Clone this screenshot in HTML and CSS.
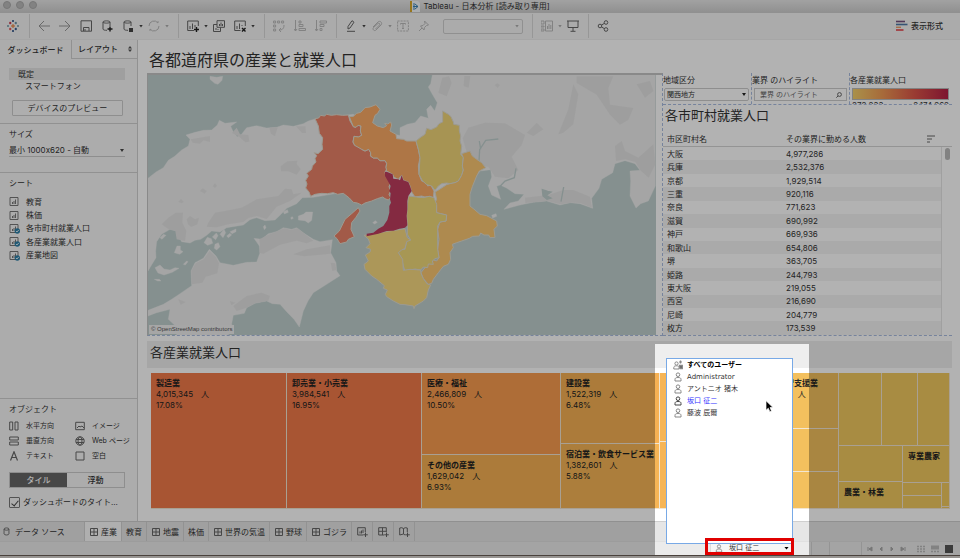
FILE: index.html
```html
<!DOCTYPE html>
<html lang="ja">
<head>
<meta charset="utf-8">
<title>Tableau - 日本分析</title>
<link rel="stylesheet" href="styles.css">
</head>
<body>
<svg class="defs" aria-hidden="true">
  <symbol id="grid" viewBox="0 0 8 8"><path d="M.5.5h7v7h-7zM.5 4h7M4 .5v7"/></symbol>
  <symbol id="sheet" viewBox="0 0 11 11"><path d="M1 1.500h8v8H1zM3.500 8V6M5 8V5M6.500 8V3.500"/></symbol>
  <symbol id="used" viewBox="0 0 11 11"><path d="M1 1.500h8v8H1zM3.500 8V6M5 8V5M6.500 8V3.500"/><circle cx="8.300" cy="8" r="2.700" fill="#2f80a8" stroke="none"/><path d="M7 8l1 1 1.700-2" stroke="#fff" stroke-width=".8"/></symbol>
  <symbol id="person" viewBox="0 0 8 10"><circle cx="4" cy="2.700" r="1.800"/><path d="M1 9V7.500C1 6 2 5.500 4 5.500S7 6 7 7.500V9z"/></symbol>
  <symbol id="people" viewBox="0 0 10 10"><circle cx="3.500" cy="3.500" r="1.600"/><path d="M.8 9V7.500C.8 6.300 2 5.800 3.500 5.800S6 6.300 6 7.500V9z"/><path d="M7.500.5v3M6.300 2h2.400M6.500 5.500h2.800v3H7z" fill="#555" stroke-width="1.300"/></symbol>
</svg>
<div class="app">
  <header class="titlebar">
    <div class="lights"><i></i><i></i><i></i></div>
    <svg class="doc" viewBox="0 0 10 11"><path fill="#f4f8fc" d="M2 0h6l2 2v9H2z"/><path fill="#d9a92c" d="M0 0h2v11H0z"/><path d="M4 2v7M3 5.500h5M5 3l3 2.500L5 8" stroke="#3a85b8" fill="none"/></svg>
    <span>Tableau - 日本分析 [読み取り専用]</span>
  </header>

  <div class="toolbar">
    <button class="logo" aria-label="スタート ページ"><svg viewBox="0 0 12 12"><path d="M6 4v4M4 6h4" stroke="#e8762d"/><path d="M3.200 1.800v2.400M2 3h2.400" stroke="#c72037"/><path d="M8.800 1.800v2.400M7.600 3H10" stroke="#5b879b"/><path d="M3.200 7.800v2.400M2 9h2.400" stroke="#e13c3c"/><path d="M8.800 7.800v2.400M7.600 9H10M6 0v2M5 1h2M6 10v2M5 11h2" stroke="#1f457e"/><path d="M1 5v2M0 6h2M11 5v2M10 6h2" stroke="#7199a6"/></svg></button>
    <div class="group">
      <button class="mid" aria-label="元に戻す"><svg viewBox="0 0 12 12"><path d="M12 6H1M6 1L1 6l5 5"/></svg></button>
      <button class="mid" aria-label="やり直す"><svg viewBox="0 0 12 12"><path d="M0 6h11M6 1l5 5-5 5"/></svg></button>
      <button aria-label="保存"><svg viewBox="0 0 12 12"><path d="M1 .8h10.500v10.400H1zM3.500 11V7.500H9V11M5 9v2"/></svg></button>
      <button aria-label="新しいデータ ソース"><svg viewBox="0 0 12 12"><path d="M9 6V2C9 .5 2 .5 2 2v7c0 1 2 1.400 4 1.300M2 2c0 1.500 7 1.500 7 0"/><path d="M9 6.500v5M6.500 9h5" stroke="#222" stroke-width="1.400"/></svg></button>
      <button aria-label="自動更新の一時停止"><svg viewBox="0 0 12 12"><path d="M9 6V2C9 .5 2 .5 2 2v7c0 1 2 1.400 4 1.300M2 2c0 1.500 7 1.500 7 0"/><path d="M7 8h4v4H7z" fill="#444" stroke="none"/></svg></button><i class="caret"></i>
      <button class="off" aria-label="更新"><svg viewBox="0 0 12 12"><path d="M1 6a5 5 0 0 1 9-3v-2M11 6a5 5 0 0 1-9 3v2"/></svg></button><i class="caret off"></i>
    </div>
    <div class="group">
      <button aria-label="新しいワークシート"><svg viewBox="0 0 12 12"><path d="M7 10.500H.7V1h10.600v5M3 9V6M5.500 9V3.500M8 7.500V5"/><path d="M9.500 7v5M7 9.500h5" stroke="#222" stroke-width="1.400"/></svg></button><i class="caret"></i>
      <button aria-label="複製"><svg viewBox="0 0 12 12"><path d="M4 .7h7.500v6.600H4zM4 4.500H.5v7h7V7.500M3 10V8M5 10V9M6.500 6V4M8 6V2.500M9.500 6V4"/></svg></button>
      <button aria-label="クリア"><svg viewBox="0 0 12 12"><path d="M6.500 10.500H.7V1h10.600v5M3 9V6M5.500 9V3.500M8 6V5"/><path d="M8 8l3.500 3.500M11.500 8L8 11.500" stroke="#222" stroke-width="1.400"/></svg></button><i class="caret"></i>
    </div>
    <div class="group off">
      <button aria-label="行と列の交換"><svg viewBox="0 0 12 12"><path d="M.6 1h2v2h-2zM4.600 1h2v2h-2zM8.600 1h2v2h-2zM.6 5h2v2h-2zM.6 9h2v2h-2zM11 5c0 4-2 5-5 5M8 8l-2 2 2 2"/></svg></button>
      <button aria-label="昇順"><svg viewBox="0 0 12 12"><path d="M1.500 0v11M0 9l1.500 2L3 9M5 1h2v2H5zM5 4.500h4v2H5zM5 8.500h6.500v2H5z"/></svg></button>
      <button aria-label="降順"><svg viewBox="0 0 12 12"><path d="M1.500 0v11M0 9l1.500 2L3 9M5 1h6.500v2H5zM5 4.500h4v2H5zM5 8.500h2v2H5z"/></svg></button>
    </div>
    <div class="group">
      <button aria-label="ハイライト"><svg viewBox="0 0 12 12"><path d="M3 9V6.500L7 .7l2 1.500L5 8zM2 11.300h8"/></svg></button><i class="caret"></i>
      <button class="off" aria-label="グループ"><svg viewBox="0 0 12 12"><path d="M2 7l5-5c2-2 5 1 3 3l-5 5c-1.500 1.500-4-.5-2.500-2.500L7 3.500C8 2.500 9.500 4 8.500 5L4.500 9"/></svg></button><i class="caret off"></i>
      <button class="off" aria-label="ラベル"><svg viewBox="0 0 12 12"><path d="M.6 1h10.800v10H.6z" stroke-dasharray="2 1"/><path d="M3.500 4.500V3.500h5v1M6 3.500v5M5 8.500h2"/></svg></button>
      <button class="off" aria-label="軸の固定"><svg viewBox="0 0 12 12"><path d="M6.500 1l4 4-2 .5-2 2-.5 2.500L2.500 6 5 5.500l2-2zM4 8l-3 3"/></svg></button>
      <select class="fit" aria-label="表示サイズ" disabled><option></option></select><i class="caret off fitcaret"></i>
    </div>
    <div class="group">
      <button class="off" aria-label="カードの表示"><svg viewBox="0 0 12 12"><path d="M0 1h3v3H0zM0 6h3v1H0zM0 9h3v2H0zM4.500 1h7v10h-7zM6.500 9V6M8 9V4M9.800 9V5"/></svg></button><i class="caret off"></i>
      <button aria-label="プレゼンテーション"><svg viewBox="0 0 12 12"><path d="M0 1h12M1 1v6.500h10V1M6 7.500V11M3.500 11.300h5"/></svg></button>
    </div>
    <div class="group">
      <button aria-label="共有"><svg viewBox="0 0 12 12"><circle cx="3" cy="6" r="1.800"/><circle cx="9" cy="2.500" r="1.800"/><circle cx="9" cy="9.500" r="1.800"/><path d="M4.500 5l3-1.700M4.500 7l3 1.700"/></svg></button>
    </div>
    <button class="showme"><svg viewBox="0 0 12 12"><path d="M0 1.500h9" stroke="#74517f" stroke-width="1.600"/><path d="M0 4.500h11.500" stroke="#4e79a7" stroke-width="1.600"/><path d="M0 7.300h5" stroke="#e8a06a" stroke-width="1.400"/><path d="M0 10h7.500" stroke="#e8434b" stroke-width="1.600"/></svg>表示形式</button>
  </div>

  <div class="body">
    <aside class="side">
      <div class="sidetabs"><button class="on">ダッシュボード</button><button>レイアウト<svg viewBox="0 0 4 6"><path d="M0 2.500L2 0l2 2.500zM0 3.500L2 6l2-2.500z"/></svg></button></div>
      <section class="device">
        <button class="dev on">既定</button>
        <button class="dev sub">スマートフォン</button>
        <button class="preview">デバイスのプレビュー</button>
      </section>
      <section class="size">
        <label for="size">サイズ</label>
        <select id="size"><option>最小 1000x620 - 自動</option></select>
      </section>
      <section class="sheets">
        <h2>シート</h2>
        <ul>
          <li><svg><use href="#sheet"/></svg>教育</li>
          <li><svg><use href="#sheet"/></svg>株価</li>
          <li><svg><use href="#used"/></svg>各市町村就業人口</li>
          <li><svg><use href="#used"/></svg>各産業就業人口</li>
          <li><svg><use href="#used"/></svg>産業地図</li>
        </ul>
      </section>
      <section class="objects">
        <h2>オブジェクト</h2>
        <ul>
          <li><svg viewBox="0 0 10 10"><path d="M.7 1h3v8h-3zM6 1h3v8H6z"/></svg>水平方向</li>
          <li><svg viewBox="0 0 10 10"><path d="M.7 1.300h8.600v7.400H.7zM2 7l2-2 1 1 2-1 2 2"/></svg>イメージ</li>
          <li><svg viewBox="0 0 10 10"><path d="M.7 1h8.600v3H.7zM.7 6h8.600v3H.7z"/></svg>垂直方向</li>
          <li><svg viewBox="0 0 10 10"><circle cx="5" cy="5" r="4.200"/><ellipse cx="5" cy="5" rx="2" ry="4.200"/><path d="M1 3.500h8M1 6.500h8"/></svg>Web ページ</li>
          <li><svg viewBox="0 0 10 10"><path d="M1.500 9.500L5 .8l3.500 8.700M2.800 6.500h4.400" stroke-width="1.200"/></svg>テキスト</li>
          <li><svg viewBox="0 0 10 10"><path d="M1 1h8v8H1z"/></svg>空白</li>
        </ul>
        <div class="toggle"><button class="on">タイル</button><button>浮動</button></div>
        <label class="check"><input type="checkbox" checked>ダッシュボードのタイト...</label>
      </section>
    </aside>

    <main class="main">
      <h1>各都道府県の産業と就業人口</h1>
      <div class="upper">
        <div class="map">
          <svg viewBox="0 0 1524 780" preserveAspectRatio="xMidYMid slice" role="img" aria-label="関西地方の産業地図">
            <g transform="translate(-24 -12)">
              <g class="land">
                <path d="M24 322L48 303 70 290 85 268 104 256 125 237 145 225 150 205 138 192 165 184 190 178 215 177 232 162 238 148 255 157 290 153 272 166 280 183 292 197 303 192 320 170 350 164 380 171 410 169 430 162 460 166 490 158 505 150 528 143 640 130 720 180 810 200 810 330 520 379 487 380 470 398 440 412 423 430 405 447 375 449 350 440 330 446 310 462 260 470 240 483 215 480 200 493 182 505 165 508 150 516 125 512 117 498 110 480 90 475 65 490 50 512 47 540 48 560 36 580 24 600Z"/>
                <path d="M24 735V718L70 700 95 685 120 668 155 644 153 600 165 575 190 562 208 535 228 555 240 575 280 583 320 574 350 573 360 545 358 525 342 502 365 505 385 488 410 482 430 470 455 475 470 470 492 487 520 505 540 512 577 506 572 545 588 575 590 600 600 614 560 640 520 665 504 690 490 720 478 768 462 745 440 722 420 700 397 698 380 690 345 697 320 710 313 727 280 733 275 758 277 770 265 792H110L112 770 85 745 90 715 50 725Z"/>
                <path d="M210 16l20 3 18-3-2 12-12 12-10-3-14-12zM475 435l15-5 8-7 20 0-3 25-10 8-10-7-20-2zM370 467l5-5 3 8-5 6zM60 500l10-10 8 3-12 12zM103 545l8-20 10 0 0 12 8 5-10 8zM45 590l15-8 12 12 18 3 15-7 12 2-20 12-25 8-18-6zM130 580l10-10 4 2-8 10zM192 515l10-16 12 4 4 14-15 6zM217 498l12-12 5 8-7 12zM225 520l10-5 5 12-10 10-7-5zM240 490l12-15 5 10-8 15zM260 495l10-8 5 5-10 8zM270 482l18-8 0 8-12 6zM430 422l12-6 3 8-12 5zM452 440l5-3 3 5-6 3zM43 625l15 0 5 5-10 0zM698 455l8-6 6 5-8 5z"/>
              </g>
              <g class="hill">
                <path d="M422 286l20-15 30-2-2 10 12 15-12 17-25-10-22 0zM180 360l8-8 12 8-6 8zM218 345l7-8 6 8-6 6zM115 392l8-8 8 8-6 5zM388 170l25-1-8 27-12-8zM468 166l28 0 2 20-12 0zM290 170l10 20 25 2 3 20-12 2-20-18-20-10z"/>
                <path d="M65 460l20-20 22-15 22 0-2 30 12 25-4 30-25-5-4-25-20-5zM140 445l10-10 15 10 12-5-5 20-18 8-10-8zM205 455l20-30 30-5 50-10 45-25 65-10 20-22 20 2 5 15 25-5-35 25-40 17-30 37-30-9-25 6-15 12-45 7-35 9-30-2zM152 205l58-10 0 18-20-5-10 10-22-3z"/>
                <path d="M358 505l30-15 45-18 20 4 20-4 22 17 25 20-20 8-30-8-50 12-50 27-12-3 2-20zM460 550l40-15 70-12 2 25-80 8zM572 575l14 2 3 20-12 3zM155 640l-1-40 13-23 24-12 18-26 18 18 10 20-5 30-35 10-10 18zM300 690l20-15 45-10 25 10-5 14-40 8-25 13-30 10-10-15zM115 685l22 8-15 8zM270 690l16 5-12 8z"/>
              </g>
            </g>
            <g transform="translate(756 -12)">
              <path class="land" d="M97 12H766V345L745 390 722 398 708 411 690 375 692 330 690 300 720 298 705 278 675 269 645 278 638 305 605 325 597 352 575 382 578 412 540 398 510 395 480 402 440 390 400 394 360 402 312 415 330 396 355 390 372 370 345 368 318 350 300 342 290 346 302 385 275 372 265 345 275 318 272 296 240 300 150 420 0 440V170L22 160 45 155 62 135 85 142 80 115 92 103 104 120 112 95 97 70 85 48 92 38Z"/>
              <g class="hill">
                <path d="M115 65l12-45 20-4 8 20-15 40zM193 15h18l-5 35-15-5zM284 42l8-5 8 5-7 9zM520 40l15 30-15 90-30 25-15 5 30-75zM205 170l50-15 60 2 60 35-10 30-30 35 20 40-30 25-40-5-20-30-35-5-30-40-12-40zM530 16h110l-15 35 5 50 70 10-15 35-25 15-30-30-40-60-60-35zM710 40l40-10 10 30-25 20zM645 225l20-15 10 30 40 20 45-40 6 60-20 40-25-22-15-25-30-8-28 5zM380 185l30-30 20 20-30 20zM375 380l70-8 45-15 30 0 50 20 6 33-35-14-25-1-35 5-40-10-65 6z"/>
              </g>
              <g class="river"><path d="M295 204l-38 4-18 28-2 35M238 210l4 25M348 292l-5 28-28 10-14 15M491 348l-8 44"/><path d="M427 356l16 5 10 2-15 10 15 8-12 4-12-10z" class="lake"/></g>
              <path class="land" d="M275 433l13-5 2 8-12 5z"/>
            </g>
            <g class="pref" transform="translate(426 33)">
              <path fill="#e98168" d="M75 98L86 96 92 88 103 90 110 85 124 88 140 86 158 88 175 87 180 105 190 122 198 124 204 118 213 120 211 135 215 148 205 153 192 151 189 168 194 178 207 182 215 190 225 195 236 190 242 200 241 210 250 216 262 216 270 224 285 224 290 232 288 244 290 250 285 258 287 267 298 275 302 290 297 302 302 315 297 325 302 335 295 342 285 338 278 333 262 338 245 345 225 351 215 357 202 351 190 349 178 336 160 322 143 325 130 320 112 323 95 322 75 325 62 331 57 318 47 306 51 294 47 283 55 270 50 262 65 250 67 240 78 228 75 218 80 209 73 200 84 203 98 190 96 175 98 155 88 142 85 120Z"/>
              <path fill="#f9a965" d="M178 92L190 91 200 82 212 79 225 65 240 63 258 56 270 70 263 82 255 88 248 110 262 120 280 125 290 119 284 112 293 114 302 108 305 117 300 135 318 145 320 158 340 160 350 165 378 165 385 190 390 215 385 240 387 265 395 285 410 290 413 300 422 297 432 315 430 335 418 331 405 333 395 330 375 333 365 318 360 300 355 288 340 283 335 268 325 280 312 274 308 265 290 255 288 244 290 232 285 224 270 224 262 216 250 216 242 210 242 200 236 190 225 195 215 190 194 178 189 168 192 151 205 153 215 148 211 135 213 120 204 118 198 124 190 122Z"/>
              <path fill="#efd477" d="M378 165L390 155 405 145 410 127 423 131 440 123 447 113 458 108 458 75 475 85 483 92 490 108 491 115 508 118 508 135 512 150 510 165 515 180 512 205 520 215 517 240 520 252 515 268 505 285 495 290 480 293 470 291 455 293 445 300 435 313 425 300 410 296 397 284 387 265 390 215 385 190Z"/>
              <path fill="#f9c671" d="M435 318L447 311 470 296 480 293 495 290 505 285 515 268 520 252 517 240 520 215 515 203 540 195 547 210 560 220 575 230 587 245 568 255 560 270 547 302 540 325 540 360 555 372 570 385 590 389 620 405 622 420 612 430 615 454 600 455 596 447 582 447 572 441 568 450 548 451 538 457 515 465 500 470 487 475 490 485 480 500 482 520 475 535 460 541 445 560 430 580 425 592 415 595 400 578 393 560 405 545 415 530 430 522 440 525 447 515 443 490 447 460 443 430 450 408 468 405 470 387 452 383 440 380 435 350 440 340Z"/>
              <path fill="#efd879" d="M355 330L380 333 400 335 418 331 432 335 440 355 440 380 452 383 470 387 468 405 450 408 443 420 443 490 447 515 435 518 427 525 430 535 415 534 413 545 400 543 392 552 375 549 345 555 340 540 335 520 325 500 335 490 345 490 350 465 362 462 352 445 352 418 350 390 352 360Z"/>
              <path fill="#f6d980" d="M222 448L255 443 290 436 320 432 345 428 352 455 362 462 350 467 345 487 335 492 325 500 338 520 340 553 360 550 392 552 393 562 400 578 412 594 422 597 415 612 410 635 400 645 375 660 372 668 370 660 345 656 330 655 310 645 290 632 286 625 292 612 280 607 283 599 260 580 245 570 225 550 222 535 235 525 226 507 240 498 242 490 228 485 240 473 235 459Z"/>
              <path fill="#be3d5e" stroke="none" d="M285 258L290 257 308 265 310 278 325 280 330 283 335 268 340 283 355 288 360 300 365 315 355 330 352 345 352 370 350 390 352 418 345 425 328 428 310 434 290 435 265 443 230 451 230 443 250 440 265 428 280 420 292 402 298 380 298 360 303 350 300 340 302 322 298 315 302 300 285 270Z"/>
              <path fill="#e98168" d="M205 365L210 375 197 395 185 410 183 430 193 452 175 460 170 468 150 473 141 458 132 450 148 435 165 400 185 383Z"/>
            </g>
          </svg>
          <small>© OpenStreetMap contributors</small>
        </div>
        <div class="right">
          <div class="filters">
            <div class="f1"><label for="area">地域区分</label><select id="area"><option>関西地方</option></select></div>
            <div class="f2"><label for="hl">業界 のハイライト</label><div class="search"><input id="hl" type="text" placeholder="業界 のハイライト"><svg viewBox="0 0 6 6"><circle cx="3.500" cy="2.500" r="1.900"/><path d="M2 4L.3 5.700"/></svg></div></div>
            <div class="f3"><span>各産業就業人口</span><div class="ramp"></div><div class="range"><span>272,233</span><span>2,174,262</span></div></div>
          </div>
          <h2>各市町村就業人口</h2>
          <div class="cols"><span>市区町村名</span><span>その業界に勤める人数</span><svg viewBox="0 0 8 8"><path d="M0 1h8M0 4h5M0 7h3"/></svg></div>
          <div class="scroll">
            <table>
              <tr><td>大阪</td><td>4,977,286</td></tr>
              <tr><td>兵庫</td><td>2,532,376</td></tr>
              <tr><td>京都</td><td>1,929,514</td></tr>
              <tr><td>三重</td><td>920,116</td></tr>
              <tr><td>奈良</td><td>771,623</td></tr>
              <tr><td>滋賀</td><td>690,992</td></tr>
              <tr><td>神戸</td><td>669,936</td></tr>
              <tr><td>和歌山</td><td>654,806</td></tr>
              <tr><td>堺</td><td>363,705</td></tr>
              <tr><td>姫路</td><td>244,793</td></tr>
              <tr><td>東大阪</td><td>219,055</td></tr>
              <tr><td>西宮</td><td>216,690</td></tr>
              <tr><td>尼崎</td><td>204,779</td></tr>
              <tr><td>枚方</td><td>173,539</td></tr>
            </table>
            <div class="bar"><i></i></div>
          </div>
        </div>
      </div>
      <h2 class="band">各産業就業人口</h2>
      <div class="tree">
        <div class="t red"><b>製造業</b><span>4,015,345　人</span><span>17.08%</span></div>
        <div class="t red"><b>卸売業・小売業</b><span>3,984,541　人</span><span>16.95%</span></div>
        <div class="stack s1">
          <div class="t orange"><b>医療・福祉</b><span>2,466,809　人</span><span>10.50%</span></div>
          <div class="t amber"><b>その他の産業</b><span>1,629,042　人</span><span>6.93%</span></div>
        </div>
        <div class="stack s2">
          <div class="t amber"><b>建設業</b><span>1,522,319　人</span><span>6.48%</span></div>
          <div class="t amber2"><b>宿泊業・飲食サービス業</b><span>1,382,601　人</span><span>5.88%</span></div>
        </div>
        <div class="stack s3"><div class="t amber2"></div><div class="t amber2"></div></div>
        <div class="stack s4">
          <div class="t gold"><b>教育・学習支援業</b><span>1,062,014　人</span></div>
          <div class="t gold"></div><div class="t gold"></div>
        </div>
        <div class="stack s5">
          <div class="top3"><div class="t sand"></div><div class="t sand"></div><div class="t sand"></div></div>
          <div class="low">
            <div class="stack s6"><div class="t sand"></div><div class="t sand"><b>農業・林業</b></div></div>
            <div class="stack s7"><div class="t sand"><b>専業農家</b></div>
              <div class="tiny"><div class="stack s8"><div class="t sand"></div><div class="t sand"></div></div><div class="stack s9"><div class="t sand"></div><div class="t sand"></div></div></div>
            </div>
          </div>
        </div>
      </div>
    </main>
  </div>

  <nav class="tabs">
    <button class="source"><svg viewBox="0 0 8 10"><ellipse cx="4" cy="2.200" rx="2.800" ry="1.300"/><path d="M1.200 2.200v5.600c0 1.600 5.600 1.600 5.600 0V2.200"/></svg>データ ソース</button>
    <button class="on"><svg><use href="#grid"/></svg>産業</button>
    <button>教育</button>
    <button><svg><use href="#grid"/></svg>地震</button>
    <button>株価</button>
    <button><svg><use href="#grid"/></svg>世界の気温</button>
    <button><svg><use href="#grid"/></svg>野球</button>
    <button><svg><use href="#grid"/></svg>ゴジラ</button>
    <button class="new" aria-label="新しいワークシート"><svg viewBox="0 0 11 10"><path d="M6 8H.7V.7h7.600V5M3 6.500v-2M4.500 6.500v-3M6 6V2.500M8.500 5.500v4.500M6.200 7.800h4.600"/></svg></button>
    <button class="new" aria-label="新しいダッシュボード"><svg viewBox="0 0 11 10"><path d="M6 8H.7V.7h7.600V5M.7 4.300h7.600M4.500.7V8M8.500 5.500v4.500M6.200 7.800h4.600"/></svg></button>
    <button class="new" aria-label="新しいストーリー"><svg viewBox="0 0 11 10"><path d="M6 8L4.500 7 .7 8V1l2-.3 1.800.8 1.800-.8 2 .3v4M4.500 1.500V7M8.500 5.500v4.500M6.200 7.800h4.600"/></svg></button>
  </nav>

  <footer class="status">
    <div class="user">
      <div class="spotlight"></div>
      <ul class="menu">
        <li><button class="all"><svg class="wide"><use href="#people"/></svg>すべてのユーザー</button></li>
        <li><button><svg><use href="#person"/></svg>Administrator</button></li>
        <li><button><svg><use href="#person"/></svg>アントニオ 猪木</button></li>
        <li><button class="on"><svg><use href="#person"/></svg>坂口 征二</button></li>
        <li><button><svg><use href="#person"/></svg>藤波 辰爾</button></li>
      </ul>
      <button class="current"><svg><use href="#person"/></svg><span>坂口 征二</span><i class="caret"></i></button>
      <div class="frame"></div>
      <svg class="pointer" viewBox="0 0 9 13"><path d="M1 .7v9.600l2.300-2.100 1.500 3.500 1.700-.8L5 7.600h3z" fill="#000" stroke="#fff" stroke-width=".7"/></svg>
    </div>
    <i class="cell"></i><i class="cell"></i><i class="cell wide"></i>
    <div class="pager">
      <button aria-label="最初"><svg viewBox="0 0 6 6"><path d="M1 1v4M5 1v4L2 3z"/></svg></button>
      <button aria-label="前"><svg viewBox="0 0 6 6"><path d="M4 1v4L2 3z"/></svg></button>
      <button aria-label="次"><svg viewBox="0 0 6 6"><path d="M2 1v4l2-2z"/></svg></button>
      <button aria-label="最後"><svg viewBox="0 0 6 6"><path d="M5 1v4M1 1v4l3-2z"/></svg></button>
    </div>
    <div class="views">
      <button aria-label="シート ソーター"><svg viewBox="0 0 8 8"><path d="M0 1.500h8M0 4h8M0 6.500h8" stroke-width="1.600" stroke-dasharray="2 1"/></svg></button>
      <button aria-label="フィルムストリップ"><svg viewBox="0 0 8 8"><path d="M0 2.500h8" stroke-width="4"/><path d="M0 6.500h8" stroke-width="1.600" stroke-dasharray="2 1"/></svg></button>
      <button class="on" aria-label="タブ"><svg viewBox="0 0 8 8"><path d="M0 4h8" stroke-width="8"/></svg></button>
    </div>
  </footer>
  <div class="desk"></div>
</div>
</body>
</html>
```
FILE: styles.css
```css
* { box-sizing: border-box; }
body {
  margin: 0;
  font: 8px/12px Inter, "Noto Sans CJK JP", sans-serif;
  color: #333;
}
h1, h2, ul { margin: 0; padding: 0; font: inherit; list-style: none; }
button, input, select {
  margin: 0;
  padding: 0;
  border: 0;
  border-radius: 0;
  background: none;
  color: inherit;
  font: inherit;
  appearance: none;
}
svg { display: block; flex: none; fill: none; stroke: #666; }
.defs { position: absolute; width: 0; height: 0; }

.app { position: relative; display: flex; flex-direction: column; min-height: 100vh; overflow: hidden; background: #fff; }

/* Title bar */
.titlebar { position: relative; display: flex; align-items: center; justify-content: center; gap: 3px; height: 13px; line-height: 11px; background: linear-gradient(#e8e8e8, #cdcdcd); color: #333; }
.titlebar .doc { width: 10px; height: 11px; stroke: none; }
.lights { position: absolute; left: 3px; top: 1px; display: flex; gap: 5px; }
.lights i { width: 8px; height: 8px; border: 1px solid #aaa; border-radius: 50%; background: #bbb; }

/* Toolbar */
.toolbar { display: flex; align-items: center; height: 27px; background: #f5f5f5; border-bottom: 1px solid #eee; }
.toolbar svg { width: 12px; height: 12px; }
.logo { margin: 0 10px 0 7px; }
.group { display: flex; align-items: center; gap: 9px; height: 24px; padding: 0 9px 0 8px; border-left: 1px solid #d8d8d8; }
.caret { width: 4px; height: 3px; margin: 0 -4px; background: #444; clip-path: polygon(0 0, 100% 0, 50% 100%); }
.caret:last-child { margin-right: 0; }
.off { opacity: .4; }
.mid { opacity: .65; }
.group.off { opacity: 1; }
.group.off button { opacity: .4; }
.fit { width: 80px; height: 15px; margin-left: 4px; border: 1px solid #cfcfcf; border-radius: 2px; opacity: 1; }
.fitcaret.caret { margin: 0 4px 0 -17px; }
.showme { display: flex; align-items: center; gap: 3px; margin: 0 17px 0 auto; font-weight: 500; }

/* Side pane */
.body { display: flex; flex: 1; }
.side { display: flex; flex-direction: column; flex: none; width: 138px; border-right: 1px solid #d0d0d0; background: #f7f7f7; }
.sidetabs { display: flex; height: 19px; font-weight: 500; }
.sidetabs button { flex: 1 1 71px; }
.sidetabs button + button { display: flex; flex: 1 1 66px; align-items: center; justify-content: flex-end; gap: 10px; padding-right: 5px; border: solid #d0d0d0; border-width: 0 0 1px 1px; }
.sidetabs svg { width: 4px; height: 6px; fill: #555; stroke: none; }
.side section { border-bottom: 1px solid #d0d0d0; padding: 0 12px 0 9px; }
.side .device { height: 65px; padding-top: 9px; }
.device .dev { display: block; width: 100%; height: 12px; line-height: 11px; padding-left: 9px; text-align: left; }
.device .dev.on { background: #e4e4e4; }
.device .dev.sub { padding-left: 16px; }
.device .preview { display: block; width: 111px; height: 16px; line-height: 13px; margin: 8px 0 0 3px; border: 1px solid #ccc; border-radius: 1px; background: #fafafa; }
.size { position: relative; height: 49px; }
.size label { display: block; margin-top: 4px; }
.size select { display: block; width: 100%; height: 14px; margin-top: 3px; border-bottom: 1px solid #ccc; }
.size::after { content: ""; position: absolute; right: 13px; top: 25px; border: solid transparent; border-width: 3px 2px 0; border-top-color: #444; }
.side .sheets { flex: 1; }
.sheets h2 { padding-top: 4px; }
.sheets ul { display: grid; grid-auto-rows: 1fr; height: 67px; margin-top: 6px; }
.sheets li, .objects li { display: flex; align-items: center; gap: 6px; }
.sheets svg { width: 11px; height: 11px; stroke: #777; }
.side .objects { border-bottom: 0; height: 122px; }
.objects h2 { padding-top: 4px; }
.objects ul { display: grid; grid-template-columns: 66px 1fr; grid-auto-rows: 1fr; height: 44px; margin-top: 4px; font-size: 7px; white-space: nowrap; }
.objects li svg { width: 10px; height: 10px; }
.objects li { gap: 7px; }
.toggle { display: flex; height: 16px; margin-top: 9px; border: 1px solid #ccc; }
.toggle button { flex: 1; line-height: 13px; font-weight: 500; }
.toggle .on { background: #666; color: #fff; }
.check { display: flex; align-items: center; gap: 3px; margin-top: 8px; white-space: nowrap; }
.check input { display: grid; place-items: center; width: 11px; height: 11px; border: 1px solid #777; border-radius: 1px; }
.check input:checked::before { content: ""; width: 3px; height: 6px; border: solid #444; border-width: 0 1px 1px 0; transform: rotate(40deg); }

/* Dashboard */
.main { display: flex; flex: 1; flex-direction: column; min-width: 0; padding: 0 8px 12px 9px; }
h1 { height: 33px; padding: 9px 0 0 2px; font-size: 16px; line-height: 22px; }
.upper { display: grid; grid-template-columns: 516fr 289fr; height: 263px; }
.map { position: relative; min-width: 0; min-height: 0; padding-right: 6px; border: 1px solid #c4c4c4; border-top: 2px solid #c4c4c4; border-right: 1px dashed #a9bce0; border-bottom: 1px dashed #a9bce0; }
.map > svg { width: 100%; height: 100%; background: #bfcfcd; stroke: none; }
.land { fill: #ececec; stroke: #f0f0f0; stroke-width: 1; }
.hill { fill: #e3e3e3; stroke: none; }
.river { fill: none; stroke: #bfcfcd; stroke-width: 4; }
.lake { fill: #bfcfcd; }
.pref { stroke: #e0ddd0; stroke-width: 3; stroke-linejoin: round; }
.map small { position: absolute; left: 1px; bottom: 1px; padding: 0 2px; background: #eee; color: #555; font: 6px/9px "Liberation Sans", sans-serif; }
.right { display: flex; flex-direction: column; min-width: 0; min-height: 0; border-bottom: 1px dashed #a9bce0; }
.filters { display: grid; grid-template-columns: 88px 98px 1fr; height: 32px; border-bottom: 1px dashed #a9bce0; overflow: hidden; white-space: nowrap; }
.filters > div + div { border-left: 1px dashed #a9bce0; }
.filters label, .f3 > span { display: block; height: 14px; }
.filters > div { padding-top: 1px; line-height: 13px; }
.f1 { position: relative; }
.f1 select { display: block; width: 85px; height: 13px; margin-left: 1px; padding-left: 2px; border: 1px solid #ccc; border-radius: 2px; font-size: 7px; line-height: 11px; }
.f1::after { content: ""; position: absolute; right: 5px; top: 20px; border: solid transparent; border-width: 3px 2px 0; border-top-color: #222; }
.search { display: flex; align-items: center; height: 13px; margin: 0 2px; padding: 0 4px 0 5px; border: 1px solid #ccc; }
.search input { flex: 1; min-width: 0; height: 10px; font-size: 7px; }
.search input::placeholder { color: #666; }
.search svg { width: 6px; height: 6px; }
.ramp { height: 12px; margin: 0 3px 0 2px; border: 1px solid #bbb; background: linear-gradient(90deg, #f3d06b, #f09b54 30%, #dc5548 65%, #b41f46); }
.range { display: flex; justify-content: space-between; margin: 1px 3px 0 2px; line-height: 8px; }
.right h2 { height: 27px; padding-left: 2px; font-size: 13px; line-height: 20px; }
.cols { display: grid; grid-template-columns: 119px 1fr 8px; align-items: center; height: 15px; padding: 0 17px 0 4px; border-bottom: 1px solid #d5d5d5; }
.cols svg { width: 8px; height: 8px; }
.scroll { display: flex; flex: 1; min-height: 0; }
table { flex: 1; height: 100%; border-collapse: collapse; }
td { padding: 0 0 0 4px; line-height: 12px; }
td:first-child { width: 119px; }
tr:nth-child(even) { background: #f4f4f4; }
.bar { width: 11px; border-left: 1px solid #e6e6e6; padding: 1px 2px 0 3px; }
.bar i { display: block; height: 12px; border-radius: 3px; background: #bbb; }
.band { height: 27px; margin-top: 5px; padding-left: 3px; background: #eee; font-size: 13px; line-height: 22px; }

/* Treemap */
.tree { display: grid; grid-template-columns: 136fr 135fr 139fr 99fr 89fr 90fr 111fr; flex: 1; margin: 5px 2px 0 4px; overflow: hidden; color: #222; }
.tree div { min-width: 0; min-height: 0; }
.t { padding: 5px 0 0 5px; border: solid #f2e6d2; border-width: 0 1px 1px 0; line-height: 11px; white-space: nowrap; }
.t b, .t span { display: block; }
.stack, .top3, .low, .tiny { display: grid; }
.s1 { grid-template-rows: 82fr 54fr; }
.s2 { grid-template-rows: 71fr 65fr; }
.s3 { grid-template-rows: 69fr 67fr; }
.s4 { grid-template-rows: 56fr 43fr 37fr; }
.s5 { grid-template-rows: 73fr 63fr; }
.top3 { grid-template-columns: 43fr 36fr 32fr; }
.low { grid-template-columns: 64fr 47fr; }
.s6 { grid-template-rows: 36fr 27fr; }
.s7 { grid-template-rows: 37fr 26fr; }
.tiny { grid-template-columns: 39fr 8fr; }
.s8 { grid-template-rows: 1fr 1fr; }
.s9 { grid-template-rows: 24fr 2fr; }
.tiny .t { padding: 0; }
.red { background: #f17a4a; }
.orange { background: #f99d50; }
.amber { background: #f6b154; }
.amber2 { background: #f6b556; }
.gold { background: #f3c05e; }
.sand { background: #f1c95f; }

/* Sheet tabs */
.tabs { display: flex; height: 20px; border-top: 1px solid #cfcfcf; background: #e6e6e6; color: #333; }
.tabs button { display: flex; align-items: center; gap: 3px; padding: 0 4px; border-right: 1px solid #d2d2d2; }
.tabs .source { flex: none; width: 85px; gap: 5px; padding-left: 3px; }
.tabs .on { background: #fbfbfb; }
.tabs svg { width: 8px; height: 8px; }
.tabs .source svg { width: 7px; height: 9px; }
.tabs .new { width: 21px; }
.tabs .new svg { width: 11px; height: 10px; }
.tabs button:nth-child(n+2) svg { margin-left: 1px; }

/* Status bar */
.status { display: flex; justify-content: flex-end; height: 14px; border-top: 1px solid #e0e0e0; background: #ebebeb; }
.user { position: relative; width: 89px; font: 7px/12px "DejaVu Sans", "Noto Sans CJK JP", sans-serif; }
.spotlight { position: absolute; z-index: 5; left: -50px; right: -15px; bottom: 0; height: 211px; box-shadow: 0 0 0 2000px rgba(0, 0, 0, .3); pointer-events: none; }
.menu { position: absolute; z-index: 6; left: -39px; right: 1px; bottom: 11px; height: 186px; border: 1px solid #78a9e6; background: #fff; }
.menu button { display: flex; align-items: center; gap: 5px; width: 100%; height: 12px; padding-left: 7px; text-align: left; }
.menu svg { width: 8px; height: 10px; stroke: #888; }
.menu .wide { width: 10px; margin: 0 -1px; }
.menu .all { font-weight: 700; color: #000; }
.menu .on { color: #33f; }
.menu .on svg { stroke: #444; }
.current { display: flex; align-items: center; gap: 6px; width: 84px; height: 12px; margin-left: 5px; padding: 0 5px 0 4px; border-left: 1px solid #ddd; background: #f6f6f6; }
.current svg { width: 8px; height: 9px; stroke: #888; }
.current span { flex: 1; text-align: left; }
.current .caret { width: 5px; margin: 0; background: #000; }
.frame { position: absolute; z-index: 7; left: 0; right: 0; top: -4px; bottom: 0; border: 3px solid #e00000; pointer-events: none; }
.pointer { position: absolute; z-index: 8; left: 60px; top: -142px; width: 9px; height: 13px; }
.cell { width: 18px; border-right: 1px solid #d5d5d5; }
.cell.wide { width: 32px; }
.pager { display: flex; align-items: center; gap: 5px; width: 48px; padding-left: 5px; }
.pager svg { width: 6px; height: 6px; stroke: #aaa; fill: #aaa; }
.views { display: flex; align-items: center; gap: 6px; width: 50px; padding-left: 7px; }
.views svg { width: 8px; height: 8px; stroke: #bbb; }
.views .on svg { stroke: #555; }
.desk { height: 3px; border-top: 1px solid #6b5f58; background: #d8d4d0; }
```
